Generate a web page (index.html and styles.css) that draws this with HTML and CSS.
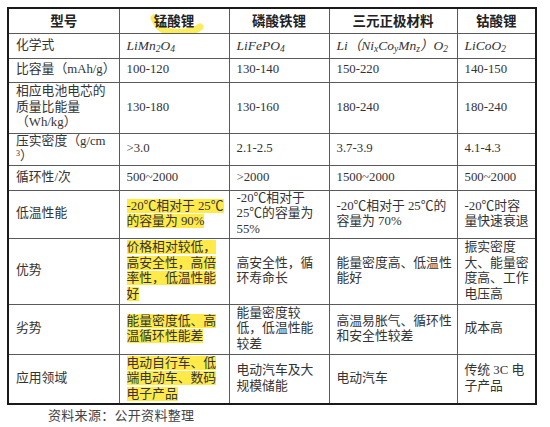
FILE: index.html
```html
<!DOCTYPE html>
<html lang="zh">
<head>
<meta charset="utf-8">
<link rel="stylesheet" href="styles.css">
</head>
<body>
<div class="wrap">
<table class="cmp">
  <colgroup>
    <col class="c1"><col class="c2"><col class="c3"><col class="c4"><col class="c5">
  </colgroup>
  <tr class="r-head">
    <th>型号</th>
    <th class="marked"><svg class="stroke" width="60" height="30" viewBox="0 0 60 30"><path d="M4 5 C8 14 12 18 22 19 C34 20 44 19 50 14" fill="none" stroke="#fbec5d" stroke-width="7" stroke-linecap="round"/></svg><span class="ht">锰酸锂</span></th>
    <th>磷酸铁锂</th>
    <th>三元正极材料</th>
    <th>钴酸锂</th>
  </tr>
  <tr class="r-formula">
    <td>化学式</td>
    <td class="f">LiMn<sub>2</sub>O<sub>4</sub></td>
    <td class="f">LiFePO<sub>4</sub></td>
    <td class="f">Li（Ni<sub>x</sub>Co<sub>y</sub>Mn<sub>z</sub>）O<sub>2</sub></td>
    <td class="f">LiCoO<sub>2</sub></td>
  </tr>
  <tr class="r-cap">
    <td>比容量（mAh/g）</td>
    <td>100-120</td>
    <td>130-140</td>
    <td>150-220</td>
    <td>140-150</td>
  </tr>
  <tr class="r-energy">
    <td>相应电池电芯的质量比能量（Wh/kg）</td>
    <td>130-180</td>
    <td>130-160</td>
    <td>180-240</td>
    <td>180-240</td>
  </tr>
  <tr class="r-dens">
    <td>压实密度（g/cm<br><sup>3</sup>）</td>
    <td>&gt;3.0</td>
    <td>2.1-2.5</td>
    <td>3.7-3.9</td>
    <td>4.1-4.3</td>
  </tr>
  <tr class="r-cycle">
    <td>循环性/次</td>
    <td>500~2000</td>
    <td>&gt;2000</td>
    <td>1500~2000</td>
    <td>500~2000</td>
  </tr>
  <tr class="r-low">
    <td>低温性能</td>
    <td><span class="hl">-20℃相对于 25℃的容量为 90%</span></td>
    <td>-20℃相对于 25℃的容量为 55%</td>
    <td>-20℃相对于 25℃的容量为 70%</td>
    <td>-20℃时容量快速衰退</td>
  </tr>
  <tr class="r-adv">
    <td>优势</td>
    <td><span class="hl">价格相对较低，高安全性，高倍率性，低温性能好</span></td>
    <td>高安全性，循环寿命长</td>
    <td>能量密度高、低温性能好</td>
    <td>振实密度大、能量密度高、工作电压高</td>
  </tr>
  <tr class="r-dis">
    <td>劣势</td>
    <td><span class="hl">能量密度低、高温循环性能差</span></td>
    <td>能量密度较低，低温性能较差</td>
    <td>高温易胀气、循环性和安全性较差</td>
    <td>成本高</td>
  </tr>
  <tr class="r-app">
    <td>应用领域</td>
    <td><span class="hl">电动自行车、低端电动车、数码电子产品</span></td>
    <td>电动汽车及大规模储能</td>
    <td>电动汽车</td>
    <td>传统 3C 电子产品</td>
  </tr>
</table>
<p class="src">资料来源：公开资料整理</p>
</div>
</body>
</html>
```

FILE: styles.css
```css
html, body {
  margin: 0;
  padding: 0;
  background: #ffffff;
}
body {
  font-family: "Liberation Serif", "Noto Sans CJK SC", serif;
  font-size: 12.8px;
  color: #333333;
}
.wrap {
  padding: 7px 0 0 7px;
}
.cmp {
  border-collapse: collapse;
  table-layout: fixed;
  width: 528px;
  border: 2px solid #1a1a1a;
}
.c1 { width: 111px; }
.c2 { width: 110px; }
.c3 { width: 100px; }
.c4 { width: 128px; }
.c5 { width: 79px; }
.cmp th, .cmp td {
  border: 1px solid #5a5a5a;
  padding: 0 1px 0 7px;
  vertical-align: middle;
  text-align: left;
  line-height: 15.5px;
  font-weight: normal;
  overflow: hidden;
}
.cmp td:nth-child(3) {
  padding-right: 8px;
}
.cmp td:nth-child(5) {
  padding-right: 5px;
}
.cmp th {
  text-align: center;
  padding: 0 4px;
  font-weight: bold;
  font-family: "Noto Sans CJK SC", sans-serif;
  font-size: 13.5px;
  color: #222222;
}
.marked {
  position: relative;
}
.stroke {
  position: absolute;
  left: 30px;
  top: 4px;
  z-index: 0;
}
.ht {
  position: relative;
  z-index: 1;
}
.f {
  font-style: italic;
  font-size: 13.5px;
}
sub {
  font-size: 9.5px;
  vertical-align: -2px;
  line-height: 0;
}
sup {
  font-size: 8px;
  vertical-align: 4px;
  line-height: 0;
}
.r-head { height: 25px; }
.r-formula { height: 25px; }
.r-cap { height: 24px; }
.r-energy { height: 51px; }
.r-dens { height: 32px; }
.r-cycle { height: 25px; }
.r-low { height: 48px; }
.r-adv { height: 66px; }
.r-dis { height: 50px; }
.r-app { height: 50px; }
.hl {
  background: #ffea4a;
}
.src {
  margin: 0 0 0 41px;
  font-size: 13px;
  color: #444444;
  letter-spacing: 0.3px;
}
```
